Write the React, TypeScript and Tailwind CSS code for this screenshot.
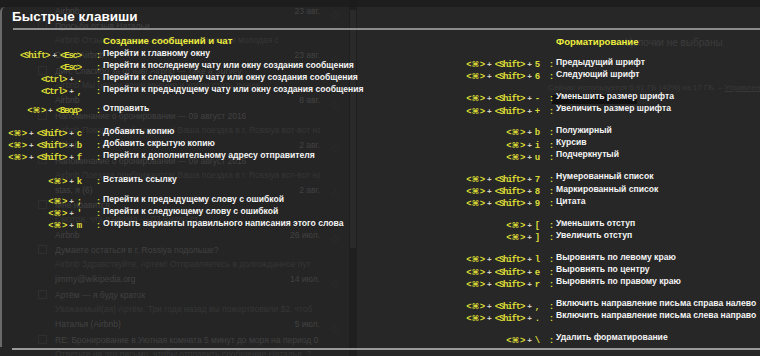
import React from 'react';

type Row = [string[], string];
type Group = { cls: string; rows: Row[] };

// faint inbox behind the help overlay
const inbox = [
  { from: 'Airbnb', date: '23 авг.', subject: 'Просьба отзыв Натальи', snippet: 'Airbnb Отзыв о хозяине: Наталья — приятная молодая с' },
  { from: 'Dean, Airbnb', date: '23 авг.', subject: 'Дин: Спасибо за отзыв! Airbnb — Take a Survey', snippet: 'Airbnb Мы ценим ваше мнение и хотим стать лучше' },
  { from: 'Airbnb', date: '8 авг.', subject: 'Напоминание о бронировании — 09 август 2016', snippet: 'Airbnb Поездка приближается! Ваша поездка в г. Rossiya вот-вот нач' },
  { from: 'Airbnb', date: '2 авг.', subject: 'Напоминание о бронировании — 09 август 2016', snippet: 'Airbnb Поездка приближается! Ваша поездка в г. Rossiya вот-вот нач' },
  { from: 'stas, я (6)', date: '2 авг.', subject: 'Мне нравится', snippet: 'Смотри, что я нашёл — 03 Видео ст' },
  { from: 'Airbnb', date: '26 июл.', subject: 'Думаете остаться в г. Rossiya подольше?', snippet: 'Airbnb Здравствуйте, Артем! Отправляетесь в долгожданное пут' },
  { from: 'jimmy@wikipedia.org', date: '14 июл.', subject: 'Артём — я буду краток', snippet: 'Уважаемый(ая) Артём, Три года назад вы пожертвовали $2, чтоб' },
  { from: 'Наталья (Airbnb)', date: '5 июл.', subject: 'RE: Бронирование в Уютная комната 5 минут до моря на период 0', snippet: 'Ответьте на это письмо, чтобы отправить сообщение Наталья. ?' },
];

const left: Group[] = [
  {
    cls: '',
    rows: [
      [['<Shift>', '<Esc>'], 'Перейти к главному окну'],
      [['<Esc>'], 'Перейти к последнему чату или окну создания сообщения'],
      [['<Ctrl>', '.'], 'Перейти к следующему чату или окну создания сообщения'],
      [['<Ctrl>', ','], 'Перейти к предыдущему чату или окну создания сообщения'],
    ],
  },
  { cls: 'mt-[7px]', rows: [[['<⌘>', '<Ввод>'], 'Отправить']] },
  {
    cls: 'mt-[11px]',
    rows: [
      [['<⌘>', '<Shift>', 'c'], 'Добавить копию'],
      [['<⌘>', '<Shift>', 'b'], 'Добавить скрытую копию'],
      [['<⌘>', '<Shift>', 'f'], 'Перейти к дополнительному адресу отправителя'],
    ],
  },
  { cls: 'mt-[12px]', rows: [[['<⌘>', 'k'], 'Вставить ссылку']] },
  {
    cls: 'mt-[8px]',
    rows: [
      [['<⌘>', ';'], 'Перейти к предыдущему слову с ошибкой'],
      [['<⌘>', "'"], 'Перейти к следующему слову с ошибкой'],
      [['<⌘>', 'm'], 'Открыть варианты правильного написания этого слова'],
    ],
  },
];

const right: Group[] = [
  {
    cls: 'mt-[8px]',
    rows: [
      [['<⌘>', '<Shift>', '5'], 'Предыдущий шрифт'],
      [['<⌘>', '<Shift>', '6'], 'Следующий шрифт'],
    ],
  },
  {
    cls: 'mt-[9.5px]',
    rows: [
      [['<⌘>', '<Shift>', '-'], 'Уменьшить размер шрифта'],
      [['<⌘>', '<Shift>', '+'], 'Увеличить размер шрифта'],
    ],
  },
  {
    cls: 'mt-[9.5px]',
    rows: [
      [['<⌘>', 'b'], 'Полужирный'],
      [['<⌘>', 'i'], 'Курсив'],
      [['<⌘>', 'u'], 'Подчеркнутый'],
    ],
  },
  {
    cls: 'mt-[9.5px]',
    rows: [
      [['<⌘>', '<Shift>', '7'], 'Нумерованный список'],
      [['<⌘>', '<Shift>', '8'], 'Маркированный список'],
      [['<⌘>', '<Shift>', '9'], 'Цитата'],
    ],
  },
  {
    cls: 'mt-[9.5px]',
    rows: [
      [['<⌘>', '['], 'Уменьшить отступ'],
      [['<⌘>', ']'], 'Увеличить отступ'],
    ],
  },
  {
    cls: 'mt-[9.5px]',
    rows: [
      [['<⌘>', '<Shift>', 'l'], 'Выровнять по левому краю'],
      [['<⌘>', '<Shift>', 'e'], 'Выровнять по центру'],
      [['<⌘>', '<Shift>', 'r'], 'Выровнять по правому краю'],
    ],
  },
  {
    cls: 'mt-[9.5px]',
    rows: [
      [['<⌘>', '<Shift>', ','], 'Включить направление письма справа налево'],
      [['<⌘>', '<Shift>', '.'], 'Включить направление письма слева направо'],
    ],
  },
  { cls: 'mt-[9.5px]', rows: [[['<⌘>', '\\'], 'Удалить форматирование']] },
];

const mono = "font-['Liberation_Mono','DejaVu_Sans_Mono',monospace] text-[9px] font-bold tracking-[-1.2px] text-[#dcdc36]";

function Key({ k }: { k: string }) {
  if (k === '<⌘>') {
    return (
      <span className={mono}>
        {'<'}
        <span className="mx-[1px] font-['DejaVu_Sans',sans-serif] text-[8px] tracking-normal">⌘</span>
        {'>'}
      </span>
    );
  }
  return <span className={mono}>{k}</span>;
}

function Keys({ keys, colon }: { keys: string[]; colon: string }) {
  return (
    <span className="whitespace-nowrap">
      {keys.map((k, i) => (
        <React.Fragment key={i}>
          {i > 0 && <span className="px-[3px] text-[8px] font-bold text-[#d0d0c4]">+</span>}
          <Key k={k} />
        </React.Fragment>
      ))}
      <span className={`${colon} text-[9px] font-bold text-[#dcdc36]`}>:</span>
    </span>
  );
}

function Column({
  title,
  groups,
  keyW,
  rowH,
  titleCls,
  colon,
}: {
  title: string;
  groups: Group[];
  keyW: string;
  rowH: string;
  titleCls: string;
  colon: string;
}) {
  return (
    <div className="flex shrink-0 flex-col">
      <div className={`flex ${titleCls}`}>
        <div className={`${keyW} shrink-0`} />
        <div className="whitespace-nowrap pl-[3px] text-[9.6px] font-bold text-[#eeee40]">{title}</div>
      </div>
      {groups.map((g, gi) => (
        <div key={gi} className={`flex flex-col ${g.cls}`}>
          {g.rows.map(([keys, desc], ri) => (
            <div key={ri} className={`flex items-center ${rowH}`}>
              <div className={`${keyW} shrink-0 text-right`}>
                <Keys keys={keys} colon={colon} />
              </div>
              <div className="whitespace-nowrap pl-[3px] text-[8.6px] font-bold text-[#f4f4f4]">{desc}</div>
            </div>
          ))}
        </div>
      ))}
    </div>
  );
}

export default function App() {
  return (
    <div className="relative h-[356px] w-[760px] overflow-hidden bg-[#252525] font-['Liberation_Sans',Arial,sans-serif]">
      {/* background: inbox */}
      <div className="flex h-full">
        <div className="flex w-[349px] shrink-0 flex-col pt-[3px]">
          {inbox.map((m, i) => (
            <div key={i} className="flex h-[44.8px] shrink-0 pl-[38px]">
              <div className="mr-[8px] mt-[18px] h-[9px] w-[9px] border border-[#2f2f2f]" />
              <div className="flex w-[265px] flex-col overflow-hidden whitespace-nowrap text-[8.5px]">
                <div className="flex h-[16px] items-center justify-between text-[#424242]">
                  <span>{m.from}</span>
                  <span>{m.date}</span>
                </div>
                <div className="flex h-[15px] items-center text-[#414141]">{m.subject}</div>
                <div className="flex h-[13px] items-center text-[#363636]">{m.snippet}</div>
              </div>
              <div className="ml-[10px] mt-[6px] text-[12px] leading-[12px] text-[#2f2f2f]">☆</div>
            </div>
          ))}
        </div>
        <div className="w-[8px] shrink-0 bg-[#1f1f1f] px-[1px] pt-[10px]">
          <div className="h-[238px] w-full bg-[#2a2a2a]" />
        </div>
        <div className="flex flex-1 flex-col bg-[#272727]">
          <div className="pl-[268px] pt-[35px] text-[10px] leading-[16px] text-[#3c3c3c]">Цепочки не выбраны</div>
          <div className="mt-[31px] whitespace-nowrap pl-[191px] text-[8px] leading-[12px] text-[#383838]">
            Сейчас используется 6,91 ГБ (40%) из 17 ГБ. – <span className="underline">Управление</span>
          </div>
          <div className="ml-[195px] mt-[1px] h-[9px] w-[85px] bg-[#121212]" />
        </div>
      </div>

      {/* keyboard shortcuts overlay */}
      <div className="absolute inset-0 flex flex-col">
        <div className="h-[7px] bg-[#1a1a1a]/70" />
        <div className="flex h-[340px] flex-col rounded-tl-[5px] border-l-2 border-[#6a6a6a]">
          <div className="flex h-[21px] items-center pl-[10px] text-[13.5px] font-bold text-white">Быстрые клавиши</div>
          <div className="ml-[11px] h-[2px] bg-[#8c8c8c]" />
          <div className="flex pt-[6px]">
            <div className="ml-[-2px] w-[456px] shrink-0">
              <Column
                title="Создание сообщений и чат"
                groups={left}
                keyW="w-[100px]"
                rowH="h-[12px]"
                titleCls="h-[11px] items-center"
                colon="ml-[16px]"
              />
            </div>
            <Column
              title="Форматирование"
              groups={right}
              keyW="w-[97px]"
              rowH="h-[12.3px]"
              titleCls="h-[12px] items-center"
              colon="ml-[11px]"
            />
          </div>
        </div>
        <div className="ml-[12px] mt-[1px] h-[2px] bg-[#9a9a9a]" />
      </div>
    </div>
  );
}
